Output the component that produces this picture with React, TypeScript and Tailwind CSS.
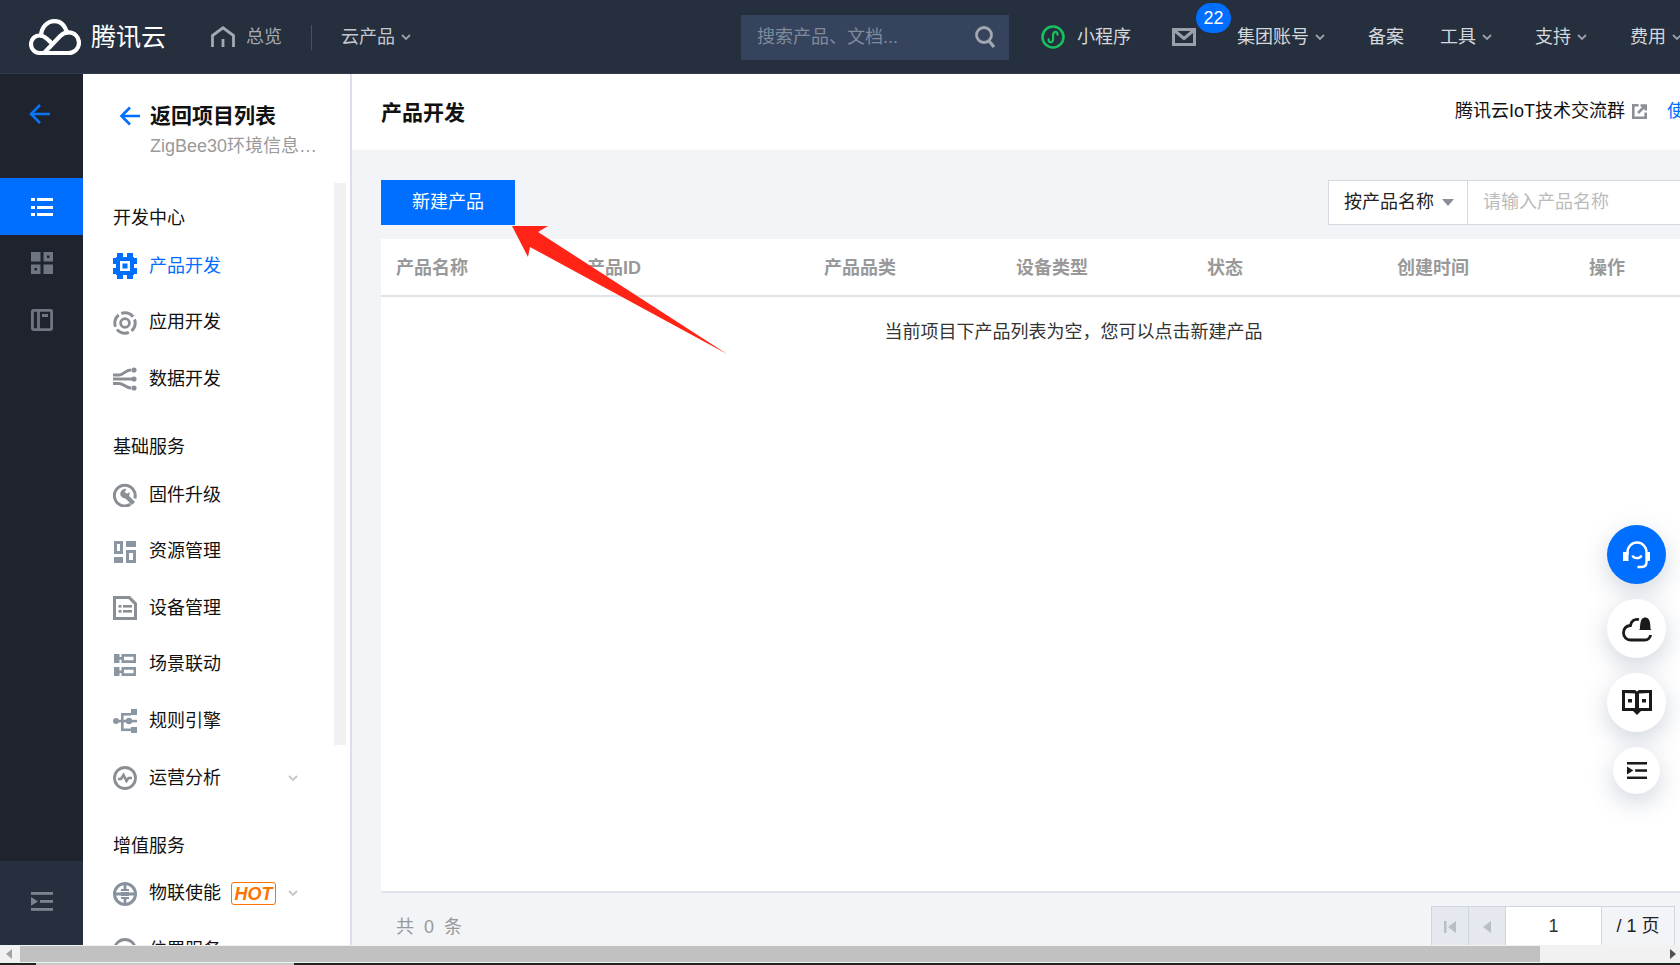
import React from "react";

const FONT = '"Liberation Sans", "Noto Sans CJK SC", sans-serif';

function Logo() {
  return (
    <svg width="52" height="38" viewBox="0 0 52 38" fill="none" stroke="#fff" strokeWidth="4.2" strokeLinejoin="round" strokeLinecap="round">
      <path d="M10.5 35h29c6 0 10.5-4.6 10.5-10.3 0-5.8-4.6-10.3-10.4-10.3-3.4 0-6.2 1.4-8.6 3.8L15.5 34.5" />
      <path d="M10.5 35C5.8 35 2 31 2 26.2c0-4.8 3.8-8.7 8.6-8.7 2.7 0 5 1 7.300 3.2l3.400 3.200" />
      <path d="M12 17.400C12.600 9.200 18 3.200 25.500 3.200c5.800 0 10 3 12.400 11.400" />
    </svg>
  );
}

function Caret({ className = "" }: { className?: string }) {
  return (
    <svg width="10" height="7" viewBox="0 0 10 7" fill="none" stroke="currentColor" strokeWidth="1.800" className={className}>
      <path d="M1 1l4 4 4-4" />
    </svg>
  );
}

function Home() {
  return (
    <svg width="24" height="22" viewBox="0 0 24 22" fill="none" stroke="#a4a9b2" strokeWidth="2.800">
      <path d="M1.500 21V9.500L12 1.800l10.500 7.700V21" />
      <path d="M12 13v8" />
    </svg>
  );
}

function ListIcon() {
  return (
    <svg width="22" height="20" viewBox="0 0 22 20" fill="#fff">
      <rect x="0" y="1" width="4" height="3" />
      <rect x="6" y="1" width="16" height="3" />
      <rect x="0" y="9" width="4" height="3" />
      <rect x="6" y="9" width="16" height="3" />
      <rect x="0" y="16" width="4" height="3" />
      <rect x="6" y="16" width="16" height="3" />
    </svg>
  );
}

function CollapseIcon({ color, w = 22 }: { color: string; w?: number }) {
  return (
    <svg width={w} height={(w * 19) / 22} viewBox="0 0 22 19" fill={color}>
      <rect x="0" y="0" width="22" height="2.800" />
      <rect x="9" y="8" width="13" height="2.800" />
      <rect x="0" y="16" width="22" height="2.800" />
      <path d="M0 5l7 4.400-7 4.400z" />
    </svg>
  );
}

const G = "#8a8f96";
const B = "#8a97a3";

function Chip({ color }: { color: string }) {
  return (
    <svg width="24" height="26" viewBox="0 0 24 26" fill={color}>
      <path fillRule="evenodd" d="M3 4h18v18H3zM7 8v10h10V8z" />
      <rect x="9.500" y="10.500" width="5" height="5" />
      <rect x="4" y="0" width="6" height="4" />
      <rect x="14" y="0" width="6" height="4" />
      <rect x="4" y="22" width="6" height="4" />
      <rect x="14" y="22" width="6" height="4" />
      <rect x="0" y="5" width="3" height="6" />
      <rect x="0" y="15" width="3" height="6" />
      <rect x="21" y="5" width="3" height="6" />
      <rect x="21" y="15" width="3" height="6" />
    </svg>
  );
}

const icons: Record<string, React.ReactNode> = {
  app: (
    <svg width="24" height="24" viewBox="0 0 24 24" fill="none" stroke={G}>
      <circle cx="12" cy="12" r="10.200" strokeWidth="3" strokeDasharray="13 3" strokeDashoffset="4" />
      <circle cx="12" cy="12" r="4.400" strokeWidth="2.800" />
    </svg>
  ),
  data: (
    <svg width="24" height="24" viewBox="0 0 24 24" fill="none" stroke={G} strokeWidth="3">
      <path d="M0 8h6c5 0 6-5 12-5" />
      <path d="M0 12h20" />
      <path d="M0 16.500h6c5 0 6 4.500 12 4.500" />
      <circle cx="21" cy="3" r="2.600" fill={G} stroke="none" />
      <circle cx="21" cy="12" r="2.600" fill={G} stroke="none" />
      <circle cx="21" cy="21" r="2.600" fill={G} stroke="none" />
    </svg>
  ),
  firmware: (
    <svg width="24" height="24" viewBox="0 0 24 24" fill="none" stroke={G}>
      <path d="M17.500 21.300A10.400 10.400 0 1 1 21.800 15.500" strokeWidth="3" />
      <path d="M11 11l9.500 9.500" strokeWidth="4.400" />
      <path d="M7.500 12.500a5 5 0 0 1 6-6.500l-2 3 2 2 3-2a5 5 0 0 1-6.500 6z" fill={G} stroke="none" />
    </svg>
  ),
  resource: (
    <svg width="22" height="22" viewBox="0 0 22 22" fill={B}>
      <path fillRule="evenodd" d="M0 0h9v13H0zM3 3v7h3V3z" />
      <rect x="12" y="0" width="10" height="6" />
      <rect x="0" y="16" width="9" height="6" />
      <path fillRule="evenodd" d="M12 9h10v13H12zM15 12v7h4v-7z" />
    </svg>
  ),
  device: (
    <svg width="24" height="24" viewBox="0 0 24 24" fill={G}>
      <path fillRule="evenodd" d="M0 0h17l7 7v17H0zM3 3v18h18V8.500L15.500 3z" />
      <rect x="5.500" y="9" width="3" height="2.600" />
      <rect x="10" y="9" width="9" height="2.600" />
      <rect x="5.500" y="14" width="3" height="2.600" />
      <rect x="10" y="14" width="9" height="2.600" />
    </svg>
  ),
  scene: (
    <svg width="22" height="22" viewBox="0 0 22 22" fill={B}>
      <rect x="0" y="0" width="5.500" height="9" />
      <rect x="0" y="13" width="5.500" height="9" />
      <rect x="5" y="3" width="4" height="2.600" />
      <rect x="5" y="16.500" width="4" height="2.600" />
      <path fillRule="evenodd" d="M7.500 0H22v9H7.500zM10 2.800v3.400h9.500V2.800z" />
      <path fillRule="evenodd" d="M7.500 13H22v9H7.500zM10 15.800v3.400h9.500v-3.400z" />
    </svg>
  ),
  rule: (
    <svg width="24" height="24" viewBox="0 0 24 24" fill={B}>
      <circle cx="3" cy="12" r="3" />
      <circle cx="16" cy="12" r="3.200" />
      <rect x="3" y="10.800" width="21" height="2.600" />
      <rect x="8" y="4" width="2.600" height="18" />
      <rect x="8" y="4" width="10" height="2.600" />
      <rect x="8" y="19.500" width="10" height="2.600" />
      <rect x="18" y="0" width="6" height="6" />
      <rect x="18" y="18" width="6" height="6" />
    </svg>
  ),
  ops: (
    <svg width="24" height="24" viewBox="0 0 24 24" fill="none" stroke={G} strokeWidth="2.800">
      <circle cx="12" cy="12" r="10.500" />
      <path d="M5 13h3l2.500-4 3 6 2-3h3.500" strokeWidth="2.600" />
    </svg>
  ),
  iot: (
    <svg width="24" height="24" viewBox="0 0 24 24" fill="none" stroke="#87929e" strokeWidth="3">
      <circle cx="12" cy="12" r="10.500" />
      <path d="M12 3v18M3 12h18" strokeWidth="2.800" />
      <rect x="8" y="7" width="8" height="10" fill="#87929e" stroke="none" />
      <path d="M7 9.500h10M7 14.500h10" stroke="#fff" strokeWidth="1.200" />
    </svg>
  ),
  loc: (
    <svg width="24" height="24" viewBox="0 0 24 24" fill="none" stroke={G} strokeWidth="2.800">
      <circle cx="12" cy="12" r="10.500" />
    </svg>
  ),
};

function NavSection({ title }: { title: string }) {
  return <div className="h-[36px] leading-[36px] text-[18px] text-[#111]">{title}</div>;
}

function NavItem({
  label,
  icon,
  active,
  children,
}: {
  label: string;
  icon: React.ReactNode;
  active?: boolean;
  children?: React.ReactNode;
}) {
  return (
    <div className="flex h-[56.6px] items-center">
      <span className="flex w-[24px] shrink-0 items-center justify-center">{icon}</span>
      <span className={`ml-[12px] text-[18px] whitespace-nowrap ${active ? "text-[#006eff]" : "text-[#111]"}`}>{label}</span>
      {children}
    </div>
  );
}

function TopLink({ label, caret, className = "" }: { label: string; caret?: boolean; className?: string }) {
  return (
    <div className={`flex shrink-0 items-center text-[18px] whitespace-nowrap ${className}`}>
      {label}
      {caret && <Caret className="ml-[6px] text-[#9aa0aa]" />}
    </div>
  );
}

function Fab({ size, blue, children }: { size: string; blue?: boolean; children: React.ReactNode }) {
  return (
    <div
      className={`flex items-center justify-center rounded-full shadow-[0_8px_24px_rgba(100,115,145,0.3)] ${size} ${blue ? "bg-[#006eff]" : "bg-white"}`}
    >
      {children}
    </div>
  );
}

const cols: [string, string][] = [
  ["产品名称", "w-[191px]"],
  ["产品ID", "w-[237px]"],
  ["产品品类", "w-[192px]"],
  ["设备类型", "w-[191px]"],
  ["状态", "w-[190px]"],
  ["创建时间", "w-[192px]"],
  ["操作", "w-[80px]"],
];

export default function App() {
  return (
    <div className="relative flex h-[965px] w-[1680px] flex-col overflow-hidden bg-white" style={{ fontFamily: FONT }}>
      {/* top bar */}
      <header className="flex h-[74px] shrink-0 items-center bg-[#262f3e] shadow-[inset_0_-1px_0_#303b4c]">
        <div className="ml-[29px] flex w-[52px] shrink-0 items-center">
          <Logo />
        </div>
        <span className="ml-[10px] shrink-0 whitespace-nowrap text-[25px] leading-none text-white">腾讯云</span>
        <span className="ml-[45px] shrink-0">
          <Home />
        </span>
        <TopLink label="总览" className="ml-[11px] text-[#a4a9b2]" />
        <span className="ml-[29px] h-[25px] w-px shrink-0 bg-[#465162]" />
        <TopLink label="云产品" caret className="ml-[29px] text-[#c4c8ce]" />
        <div className="ml-[330px] flex h-[45px] w-[268px] shrink-0 items-center justify-between bg-[#35445c] pl-[16px] pr-[13px] text-[18px] text-[#7f8a9c]">
          <span className="whitespace-nowrap">搜索产品、文档...</span>
          <svg width="22" height="24" viewBox="0 0 22 24" fill="none" stroke="#a1a8b2" strokeWidth="2.800">
            <circle cx="10" cy="10" r="7.500" />
            <path d="M15 16l5 6" strokeWidth="3.200" />
          </svg>
        </div>
        <svg className="ml-[32px] shrink-0" width="24" height="24" viewBox="0 0 24 24" fill="none" stroke="#16c060" strokeWidth="2.600">
          <circle cx="12" cy="12" r="10.500" />
          <path d="M8 13.500c-1.500 2.500.5 4 2 3.700 1.600-.3 2.100-1.700 2.100-3.200V10c0-1.600.7-2.900 2.200-3.200 1.600-.2 3 1.600 1.800 3.700" strokeWidth="2.200" />
        </svg>
        <TopLink label="小程序" className="ml-[12px] text-[#d4d7dc]" />
        <div className="relative ml-[41px] h-[18px] w-[24px] shrink-0">
          <svg width="24" height="18" viewBox="0 0 24 18" fill="none" stroke="#99a0aa" strokeWidth="3">
            <rect x="1.500" y="1.500" width="21" height="15" />
            <path d="M3 3l9 7.500L21 3" />
          </svg>
          <span className="absolute left-[24px] top-[-25px] flex h-[30px] w-[35px] items-center justify-center rounded-full bg-[#006eff] text-[18px] text-white">
            22
          </span>
        </div>
        <TopLink label="集团账号" caret className="ml-[41px] text-[#d4d7dc]" />
        <TopLink label="备案" className="ml-[43px] text-[#d4d7dc]" />
        <TopLink label="工具" caret className="ml-[36px] text-[#d4d7dc]" />
        <TopLink label="支持" caret className="ml-[43px] text-[#d4d7dc]" />
        <TopLink label="费用" caret className="ml-[43px] text-[#d4d7dc]" />
      </header>

      <div className="flex min-h-0 flex-1">
        {/* rail */}
        <aside className="flex w-[83px] shrink-0 flex-col bg-[#1e232e]">
          <div className="flex h-[104px] shrink-0 items-start justify-center pr-[4px] pt-[29px]">
            <svg width="22" height="22" viewBox="0 0 22 22" fill="none" stroke="#0a74f5" strokeWidth="2.600">
              <path d="M21 11H3M11 2l-9 9 9 9" />
            </svg>
          </div>
          <div className="flex h-[57px] shrink-0 items-center justify-center bg-[#006eff]">
            <ListIcon />
          </div>
          <div className="flex h-[57px] shrink-0 items-center justify-center pb-[2px]">
            <svg width="22" height="22" viewBox="0 0 22 22" fill="#6f7681">
              <rect width="9.500" height="9.500" />
              <path fillRule="evenodd" d="M12.500 0H22v9.500h-9.500zM16 3.500v2.500h2.500V3.500z" />
              <path fillRule="evenodd" d="M0 12.500h9.500V22H0zM3.500 16v2.500H6V16z" />
              <rect x="12.500" y="12.500" width="9.500" height="9.500" />
            </svg>
          </div>
          <div className="flex h-[57px] shrink-0 items-center justify-center pb-[2px]">
            <svg width="22" height="22" viewBox="0 0 22 22" fill="none" stroke="#6f7681" strokeWidth="2.800">
              <rect x="1.400" y="1.400" width="19.200" height="19.200" rx="1" />
              <path d="M7.500 1.300v19.400M11 6.500h6" />
            </svg>
          </div>
          <div className="flex-1" />
          <div className="flex h-[84px] shrink-0 items-start justify-center bg-[#262f3e] pt-[31px]">
            <CollapseIcon color="#7d848e" />
          </div>
        </aside>

        {/* sub nav */}
        <nav className="relative w-[269px] shrink-0 overflow-hidden border-r-2 border-[#d9dfeb] bg-white">
          <div className="flex items-center pl-[36px] pt-[29px]">
            <svg width="21" height="20" viewBox="0 0 21 20" fill="none" stroke="#006eff" strokeWidth="2.600">
              <path d="M21 10H3M11 1.500L2.500 10l8.500 8.500" />
            </svg>
            <span className="ml-[10px] text-[21px] font-bold leading-[26px] text-[#111]">返回项目列表</span>
          </div>
          <div className="ml-[67px] mt-[5px] w-[170px] truncate text-[18px] leading-[24px] text-[#9a9a9a]">ZigBee30环境信息管理系统</div>
          <div className="pl-[30px] pt-[42px]">
            <NavSection title="开发中心" />
            <div className="mt-[2px]">
              <NavItem label="产品开发" icon={<Chip color="#006eff" />} active />
              <NavItem label="应用开发" icon={icons.app} />
              <NavItem label="数据开发" icon={icons.data} />
            </div>
            <div className="mt-[21px]">
              <NavSection title="基础服务" />
            </div>
            <div className="mt-[2px]">
              <NavItem label="固件升级" icon={icons.firmware} />
              <NavItem label="资源管理" icon={icons.resource} />
              <NavItem label="设备管理" icon={icons.device} />
              <NavItem label="场景联动" icon={icons.scene} />
              <NavItem label="规则引擎" icon={icons.rule} />
              <NavItem label="运营分析" icon={icons.ops}>
                <Caret className="ml-[67px] text-[#c2c6cc]" />
              </NavItem>
            </div>
            <div className="mt-[22px]">
              <NavSection title="增值服务" />
            </div>
            <div className="mt-[1px]">
              <NavItem label="物联使能" icon={icons.iot}>
                <span className="ml-[10px] flex h-[23px] w-[45px] items-center justify-center rounded-[3px] border border-[#ff7200] text-[18px] font-bold italic leading-none text-[#ff7200]">
                  HOT
                </span>
                <Caret className="ml-[12px] text-[#c2c6cc]" />
              </NavItem>
              <NavItem label="位置服务" icon={icons.loc} />
            </div>
          </div>
          <div className="absolute left-[251px] top-[109px] h-[562px] w-[12px] bg-[#f1f1f1]" />
        </nav>

        {/* main */}
        <main className="flex min-w-0 flex-1 flex-col bg-[#f2f4f8]">
          <div className="flex h-[76px] shrink-0 items-center justify-between bg-white pl-[29px]">
            <h1 className="mt-[1px] text-[21px] font-bold text-[#111]">产品开发</h1>
            <div className="mb-[2px] flex items-center whitespace-nowrap text-[18px] text-[#111]">
              腾讯云IoT技术交流群
              <svg className="ml-[7px]" width="15" height="15" viewBox="0 0 15 15" fill="none" stroke="#8a8f96" strokeWidth="2.600">
                <path d="M6.500 1.300H1.300v12.400h12.400V8.500" />
                <path d="M6 9l7-7M8.500 1.500h5.200v5" />
              </svg>
              <span className="ml-[20px] w-[13px] overflow-hidden text-[#006eff]">使</span>
            </div>
          </div>
          <div className="flex min-h-0 flex-1 flex-col pl-[29px] pt-[30px]">
            <div className="flex h-[45px] shrink-0 items-stretch justify-between">
              <button className="w-[134px] bg-[#006eff] text-[18px] text-white">新建产品</button>
              <div className="flex">
                <div className="flex w-[140px] items-center border border-[#d4d9e2] bg-white pl-[15px] text-[18px] text-[#222]">
                  按产品名称
                  <span className="ml-[8px] h-0 w-0 border-x-[6px] border-t-[7px] border-x-transparent border-t-[#8a8f96]" />
                </div>
                <div className="flex w-[212px] items-center border-y border-[#d4d9e2] bg-white pl-[15px] text-[18px] text-[#bbbbbb]">
                  请输入产品名称
                </div>
              </div>
            </div>
            <div className="mt-[14px] flex min-h-0 flex-1 flex-col bg-white">
              <div className="flex h-[58px] shrink-0 items-center border-b-2 border-[#dfe3ea] pl-[15px] pt-[2px]">
                {cols.map(([c, w]) => (
                  <div key={c} className={`${w} shrink-0 text-[18px] font-bold text-[#999]`}>
                    {c}
                  </div>
                ))}
              </div>
              <div className="flex-1 pl-[86px] pt-[22px] text-center text-[18px] leading-[26px] text-[#333]">
                当前项目下产品列表为空，您可以点击新建产品
              </div>
            </div>
            <div className="flex h-[54px] shrink-0 items-start justify-between border-t-2 border-[#dfe3ea]">
              <div className="pl-[15px] pt-[21px] text-[18px] leading-[26px] text-[#999] whitespace-pre">共  0  条</div>
              <div className="mr-[5px] mt-[13px] flex h-[40px] items-stretch border-x border-t border-[#d0d6e0]">
                <div className="flex w-[36px] items-center justify-center bg-[#e5e8ee]">
                  <svg width="12" height="12" viewBox="0 0 12 12" fill="#b9bec6">
                    <rect width="2.500" height="12" />
                    <path d="M12 0v12L4 6z" />
                  </svg>
                </div>
                <div className="flex w-[37px] items-center justify-center border-l border-[#d0d6e0] bg-[#e5e8ee]">
                  <svg width="9" height="12" viewBox="0 0 9 12" fill="#b9bec6">
                    <path d="M8 0v12L0 6z" />
                  </svg>
                </div>
                <div className="flex w-[96px] items-center justify-center border-l border-[#d0d6e0] bg-white text-[18px] text-[#333]">1</div>
                <div className="flex w-[73px] items-center justify-center border-l border-[#d0d6e0] text-[18px] text-[#222] whitespace-nowrap">/ 1 页</div>
              </div>
            </div>
          </div>
        </main>
      </div>

      {/* horizontal scrollbar */}
      <div className="flex h-[18px] shrink-0 items-center bg-[#f1f1f1]">
        <span className="ml-[6px] h-0 w-0 border-y-[5px] border-r-[6px] border-y-transparent border-r-[#a3a3a3]" />
        <span className="ml-[8px] h-[16px] w-[1520px] bg-[#c1c1c1]" />
        <span className="ml-[130px] h-0 w-0 border-y-[5px] border-l-[6px] border-y-transparent border-l-[#505050]" />
      </div>
      <div className="flex h-[2px] shrink-0 bg-[#222]">
        <span className="ml-[36px] w-[258px] bg-[#c8c8c8]" />
      </div>

      {/* annotation arrow */}
      <svg className="pointer-events-none absolute left-0 top-0" width="1680" height="965">
        <polygon points="512,226 548,226 538,232 727,354 530,247 528,257" fill="#ff2416" />
      </svg>

      {/* floating buttons */}
      <div className="absolute left-[1607px] top-[525px] flex w-[59px] flex-col items-center gap-[15px]">
        <Fab size="h-[59px] w-[59px]" blue>
          <svg width="30" height="30" viewBox="0 0 30 30" fill="none" stroke="#fff" strokeWidth="2.400">
            <path d="M5.500 15v-3a9.500 9.500 0 0 1 19 0v10c0 3-1.500 5-5 5h-4" />
            <rect x="1" y="12" width="5.500" height="9" fill="#fff" stroke="none" />
            <rect x="24" y="12" width="4" height="9" fill="#fff" stroke="none" />
            <path d="M10.500 15.500c1 3.500 7.500 3.500 9 0" />
          </svg>
        </Fab>
        <Fab size="h-[59px] w-[59px]">
          <svg width="30" height="26" viewBox="0 0 30 26" fill="none" stroke="#1a1a1a" strokeWidth="2.800">
            <path d="M17 3.500c-5 -1-8 2-8.500 6C3.500 10 1.500 13.500 1.500 17c0 4 3 7 7 7h14c3.500 0 6-2.500 6-5" />
            <path d="M18 13c0-1 0-8 2-10 1.500-2 5-2 6.500 0 2 2 2 9 2 10l1 1H17z" fill="#1a1a1a" stroke="none" />
          </svg>
        </Fab>
        <Fab size="h-[59px] w-[59px]">
          <svg width="30" height="25" viewBox="0 0 30 25" fill="#1a1a1a">
            <path fillRule="evenodd" d="M0 0h13l2 1.500L17 0h13v21H19l-4 4-4-4H0zM3 3v15h10V3.500zM17 3.500V18h10V3z" />
            <rect x="6" y="9" width="4" height="3.500" />
            <rect x="20" y="9" width="4" height="3.500" />
          </svg>
        </Fab>
        <Fab size="h-[47px] w-[47px]">
          <CollapseIcon color="#1a1a1a" w={20} />
        </Fab>
      </div>
    </div>
  );
}
